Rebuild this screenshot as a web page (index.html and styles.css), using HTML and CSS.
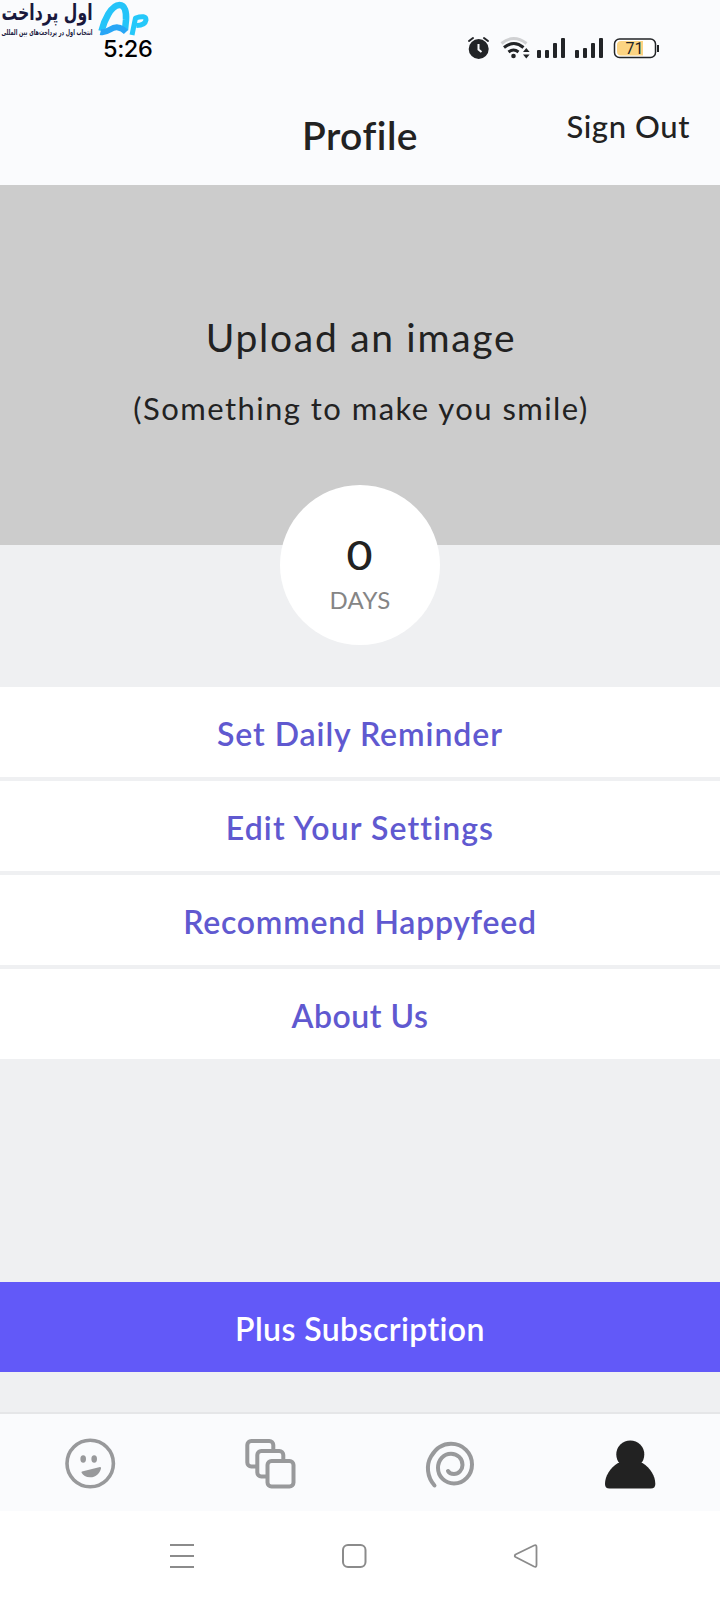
FILE: index.html
```html
<!DOCTYPE html>
<html lang="en">
<head>
<meta charset="utf-8">
<title>Profile</title>
<link rel="stylesheet" href="styles.css">
</head>
<body>
<div class="screen">
  <div class="status">
    <span class="time">5:26</span>
    <svg class="status-icons" width="196" height="26" viewBox="464 35 196 26">
      <g fill="none" stroke="#222427" stroke-width="2" stroke-linecap="round">
        <path d="M469 41l4-3M484 38l4 3"/>
      </g>
      <circle cx="478.700" cy="49" r="10" fill="#222427"/>
      <path d="M478.500 44v5.500l3 2.500" fill="none" stroke="#fafbfd" stroke-width="2"/>
      <g fill="none" stroke-linecap="butt">
        <path d="M501.500 43.500q12-10 25 0" stroke="#d0d1d3" stroke-width="3"/>
        <path d="M504 47.500q10-8 19.500 0" stroke="#222427" stroke-width="3"/>
        <path d="M508.500 52q5-4 10 0" stroke="#222427" stroke-width="3"/>
      </g>
      <circle cx="513.500" cy="56" r="2.300" fill="#222427"/>
      <path d="M523 52l3.300-4 3.300 4zM523 54.500l3.300 4 3.300-4z" fill="#222427"/>
      <g fill="#222427">
        <rect x="537" y="50" width="4" height="8" rx="1"/><rect x="545" y="50" width="4" height="8" rx="1"/><rect x="553" y="43" width="4" height="15" rx="1"/><rect x="561" y="38" width="4" height="20" rx="1"/>
        <rect x="575" y="50" width="4" height="8" rx="1"/><rect x="583" y="48" width="4" height="10" rx="1"/><rect x="591" y="43" width="4" height="15" rx="1"/><rect x="599" y="38" width="4" height="20" rx="1"/>
      </g>
      <rect x="614.500" y="39" width="41" height="18.500" rx="5" fill="#fff" stroke="#222427" stroke-width="1.500"/>
      <path d="M621 41h22v14.500h-22a4 4 0 0 1-4-4v-6.500a4 4 0 0 1 4-4z" fill="#fcd482"/>
      <path d="M658 45v7" stroke="#222427" stroke-width="2"/>
      <text class="battery-text" x="634.500" y="54" text-anchor="middle">71</text>
    </svg>
    <svg class="logo" width="154" height="38" viewBox="0 0 154 38">
      <text class="logo-name" x="47" y="20" text-anchor="middle" textLength="91" lengthAdjust="spacingAndGlyphs" direction="rtl">اول پرداخت</text>
      <text class="logo-tag" x="47" y="34.500" text-anchor="middle" textLength="91" lengthAdjust="spacingAndGlyphs" direction="rtl">انتخاب اول در پرداخت‌های بین المللی</text>
      <g fill="none" stroke-linejoin="round">
        <path d="M101.500 31C104 21 111 5 119.500 5C125 5 126.500 12 126 20L125 30" stroke="#25c4f9" stroke-width="6.500"/>
        <path d="M100.500 32C108 34 111 26 118 27.500Q122 28 126 32" stroke="#28a6f6" stroke-width="6"/>
        <path d="M132 35L135.500 18Q146 14.500 146 20Q145 25.500 136.500 25.500" stroke="#25c8fa" stroke-width="5"/>
      </g>
    </svg>
  </div>
  <header class="header">
    <span class="side"></span>
    <h1 class="title">Profile</h1>
    <span class="side signout">Sign Out</span>
  </header>
  <section class="hero">
    <div class="upload">Upload an image</div>
    <div class="hint">(Something to make you smile)</div>
  </section>
  <section class="stats">
    <div class="circle"><span class="count">0</span><span class="days">DAYS</span></div>
  </section>
  <nav class="menu">
    <a class="row reminder">Set Daily Reminder</a>
    <a class="row settings">Edit Your Settings</a>
    <a class="row recommend">Recommend Happyfeed</a>
    <a class="row about">About Us</a>
  </nav>
  <div class="plus">Plus Subscription</div>
  <nav class="tabs">
    <svg width="60" height="60" viewBox="60 1433 60 60">
      <circle cx="90.200" cy="1463.500" r="23.200" fill="none" stroke="#98999b" stroke-width="3.600"/>
      <ellipse cx="83.200" cy="1459" rx="2.800" ry="3.700" fill="#98999b"/>
      <ellipse cx="94.200" cy="1459" rx="2.800" ry="3.700" fill="#98999b"/>
      <path d="M82 1471.500l18-4.500q1.500 0 1 1.500c-1.500 6-6 9-11 8.800-4 0-7-2-8.400-4.600q-.4-1 .4-1.200z" fill="#98999b"/>
    </svg>
    <svg width="60" height="60" viewBox="240 1433 60 60" fill="#fafbfd" stroke="#98999b" stroke-width="4">
      <rect x="247.300" y="1441" width="26" height="25.500" rx="4"/>
      <rect x="257.300" y="1451" width="26" height="25.500" rx="4"/>
      <rect x="267.500" y="1461" width="26" height="25.500" rx="4"/>
    </svg>
    <svg width="60" height="60" viewBox="420 1433 60 60" fill="none" stroke="#98999b" stroke-width="4" stroke-linecap="round">
      <path d="M434.500 1485.500C427 1477 426 1465 431 1456.500C436 1448 443 1443.800 451 1443.800C463 1443.800 472 1453 472 1464.500C472 1475 464 1483.500 454 1483.500C445 1483.500 438 1476.500 438 1468C438 1460 443.500 1453.700 451 1453.700C457.500 1453.700 462.500 1458.500 462.500 1465C462.500 1470 458.500 1474 454 1474C451 1474 449 1473 448 1471"/>
    </svg>
    <svg width="60" height="60" viewBox="600 1433 60 60" fill="#222">
      <circle cx="630.300" cy="1454.500" r="14"/>
      <path d="M618 1463h24.500c8 5 12.800 13 12.800 21q0 4.500-4.500 4.500h-41.300q-4.500 0-4.500-4.500c0-8 5-16 13-21z"/>
    </svg>
  </nav>
  <div class="system">
    <svg width="26" height="28" viewBox="169 1541 26 28" stroke="#8b8b8b" stroke-width="2"><path d="M170 1545h24M170 1556h24M170 1567h24"/></svg>
    <svg width="26" height="28" viewBox="341 1541 26 28" fill="none" stroke="#8b8b8b" stroke-width="2"><rect x="343" y="1545" width="22.500" height="22" rx="5"/></svg>
    <svg width="26" height="28" viewBox="513 1541 26 28" fill="none" stroke="#8b8b8b" stroke-width="1.800" stroke-linejoin="round"><path d="M515.500 1554.500L534 1545.500Q536.500 1544.500 536.500 1547V1565Q536.500 1567.500 534 1566.500L515.500 1557Q514 1556 515.500 1554.500Z"/></svg>
  </div>
</div>
</body>
</html>
```
FILE: styles.css
```css
body {
  margin: 0;
  font-family: Lato, "Liberation Sans", sans-serif;
  color: #222;
}

.screen {
  display: flex;
  flex-direction: column;
  width: 720px;
  height: 1600px;
  background: #eff0f2;
  overflow: hidden;
}

svg { display: block; }

.status {
  position: relative;
  display: flex;
  justify-content: space-between;
  align-items: flex-start;
  box-sizing: border-box;
  height: 90px;
  padding: 35px 60px 0 103px;
  background: #fafbfd;
}

.time {
  font: 500 23.5px/28px Inter, sans-serif;
  letter-spacing: -0.4px;
  color: #000;
}

.battery-text { font: 400 16px Roboto, sans-serif; fill: #222427; }

.logo { position: absolute; left: 0; top: 0; }
.logo-name { font: bold 22px "DejaVu Sans", sans-serif; fill: #19183c; }
.logo-tag { font: bold 8px "DejaVu Sans", sans-serif; fill: #19183c; }

.header {
  display: flex;
  box-sizing: border-box;
  height: 95px;
  padding: 15px 30px 0;
  background: #fafbfd;
  white-space: nowrap;
}

.side { flex: 1; }
.title { margin: 0; font-size: 39px; font-weight: 600; line-height: 60px; letter-spacing: 0.5px; }
.signout { text-align: right; font-size: 31px; font-weight: 500; line-height: 43px; letter-spacing: 0.6px; }

.hero {
  display: flex;
  flex-direction: column;
  align-items: center;
  box-sizing: border-box;
  height: 360px;
  padding-top: 122px;
  background: #ccc;
  white-space: nowrap;
}

.upload { padding-left: 2px; font-size: 39px; line-height: 60px; letter-spacing: 1.7px; }
.hint { margin-top: 11px; padding-left: 2px; font-size: 31px; line-height: 60px; letter-spacing: 1.45px; }

.stats { display: flex; justify-content: center; height: 142px; }

.circle {
  display: flex;
  flex-direction: column;
  align-items: center;
  box-sizing: border-box;
  width: 160px;
  height: 160px;
  margin-top: -60px;
  padding-top: 45px;
  border-radius: 50%;
  background: #fff;
}

.count { font-size: 40px; font-weight: 500; line-height: 50px; transform: scaleX(1.12); }
.days { margin-top: 5px; font-size: 24px; line-height: 30px; letter-spacing: 0.3px; color: #858585; }

.menu { display: flex; flex-direction: column; gap: 4px; }

.row, .plus {
  display: flex;
  justify-content: center;
  height: 90px;
  font-size: 32px;
  font-weight: 600;
  line-height: 94px;
  white-space: nowrap;
}

.row { background: #fff; color: #6059d0; }
.reminder { letter-spacing: 0.95px; }
.settings { letter-spacing: 1.1px; }
.recommend { letter-spacing: 0.75px; }
.about { letter-spacing: 0.5px; }
.plus { margin-top: 223px; background: #6259f8; color: #fff; letter-spacing: 0.4px; }

.tabs {
  display: flex;
  justify-content: space-between;
  box-sizing: border-box;
  height: 99px;
  margin-top: 40px;
  padding: 19px 60px 0;
  border-top: 2px solid #e5e6e8;
  background: #fafbfd;
}

.system {
  display: flex;
  justify-content: space-between;
  flex: 1;
  padding: 30px 181px 0 169px;
  background: #fff;
}
```
